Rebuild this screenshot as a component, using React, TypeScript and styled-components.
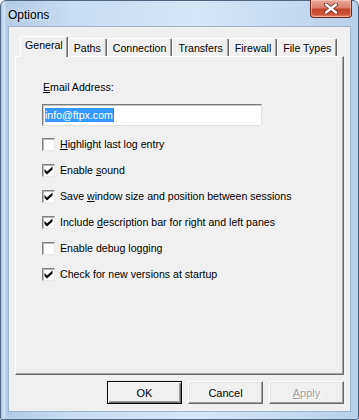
import styled, { createGlobalStyle } from "styled-components";

const Global = createGlobalStyle`
  html, body {
    margin: 0;
    padding: 0;
    width: 359px;
    height: 420px;
    overflow: hidden;
    background: #ffffff;
  }
  * {
    box-sizing: border-box;
  }
`;

const Window = styled.div`
  width: 359px;
  height: 420px;
  display: flex;
  flex-direction: column;
  padding: 0 7px 7px 7px;
  border: 1px solid #4f6683;
  border-radius: 6px 6px 2px 2px;
  background: linear-gradient(
    to right,
    #a9c3e0 0px,
    #d6e5f5 3px,
    #b4cbe5 5px,
    #c9dcf0 20%,
    #d7e6f6 55%,
    #c3d8ee 85%,
    #b8cfe8 100%
  );
  font-family: "Liberation Sans", Arial, sans-serif;
  font-size: 10.6px;
  color: #000;
`;

const TitleBar = styled.div`
  height: 25px;
  display: flex;
  justify-content: space-between;
  align-items: flex-start;
  margin-right: -1px;
`;

const Title = styled.div`
  font-size: 12px;
  padding-top: 7px;
  color: #000;
  text-shadow: 0 0 6px rgba(255, 255, 255, 0.9);
`;

const CloseButton = styled.div`
  width: 42px;
  height: 18px;
  margin-top: -1px;
  display: flex;
  align-items: center;
  justify-content: center;
  border: 1px solid #6d2a1d;
  border-top: none;
  border-radius: 0 0 4px 4px;
  background: linear-gradient(
    to bottom,
    #e9a99a 0%,
    #d9806b 45%,
    #c4442a 55%,
    #d0563c 85%,
    #e48a6f 100%
  );
  box-shadow: inset 0 0 0 1px rgba(255, 210, 200, 0.55);
`;

const Client = styled.div`
  flex: 1;
  display: flex;
  flex-direction: column;
  background: #f0f0f0;
  border: 1px solid #9fb3cb;
  padding: 9px 6px 7px 6px;
`;

const TabStrip = styled.div`
  display: flex;
  align-items: flex-end;
  padding-left: 5px;
  height: 20px;
`;

const Tab = styled.div<{ $active?: boolean }>`
  position: relative;
  z-index: ${(p) => (p.$active ? 2 : 1)};
  height: ${(p) => (p.$active ? "21px" : "18px")};
  margin-bottom: ${(p) => (p.$active ? "-1px" : "0")};
  padding: ${(p) => (p.$active ? "2px 4px 0 4px" : "3px 5px 0 5px")};
  background: #f0f0f0;
  border-top: 1px solid #ffffff;
  border-left: 1px solid #ffffff;
  border-right: 1px solid #696969;
  border-radius: 2px 2px 0 0;
  box-shadow: inset -1px 0 0 #a0a0a0;
  white-space: nowrap;
`;

const Panel = styled.div`
  flex: 1;
  display: flex;
  flex-direction: column;
  padding: 24px 26px 0 26px;
  border-top: 1px solid #ffffff;
  border-left: 1px solid #ffffff;
  border-right: 1px solid #696969;
  border-bottom: 1px solid #696969;
  box-shadow: inset -1px -1px 0 #a0a0a0;
`;

const FieldLabel = styled.div`
  height: 13px;
  line-height: 13px;
  padding-left: 1px;
`;

const TextInput = styled.div`
  width: 220px;
  height: 22px;
  margin-top: 10px;
  display: flex;
  align-items: center;
  padding-left: 2px;
  background: #ffffff;
  border-top: 1px solid #7a7a7a;
  border-left: 1px solid #7a7a7a;
  border-right: 1px solid #e3e3e3;
  border-bottom: 1px solid #e3e3e3;
  box-shadow: inset 1px 1px 0 #c8c8c8;
`;

const Selected = styled.span`
  background: #3399ff;
  color: #ffffff;
  line-height: 14px;
  border-right: 1px solid #c85a00;
`;

const Options = styled.div`
  display: flex;
  flex-direction: column;
  gap: 13px;
  margin-top: 12px;
`;

const Row = styled.label`
  display: flex;
  align-items: center;
  gap: 5px;
  height: 13px;
  line-height: 13px;
  white-space: nowrap;
`;

const Box = styled.span`
  width: 13px;
  height: 13px;
  flex: none;
  display: flex;
  align-items: center;
  justify-content: center;
  background: #ffffff;
  border-top: 1px solid #808080;
  border-left: 1px solid #808080;
  border-right: 1px solid #e8e8e8;
  border-bottom: 1px solid #e8e8e8;
  box-shadow: inset 1px 1px 0 #b8b8b8;
`;

const U = styled.span`
  text-decoration: underline;
`;

const ButtonRow = styled.div`
  display: flex;
  justify-content: flex-end;
  gap: 6px;
  margin-top: 6px;
`;

const Button = styled.div<{ $default?: boolean; $disabled?: boolean }>`
  width: 75px;
  height: 23px;
  display: flex;
  align-items: center;
  justify-content: center;
  font-size: 11px;
  background: #f0f0f0;
  color: ${(p) => (p.$disabled ? "#a0a0a0" : "#000")};
  text-shadow: ${(p) => (p.$disabled ? "1px 1px 0 #ffffff" : "none")};
  border: 1px solid ${(p) => (p.$default ? "#000000" : "#ffffff")};
  border-right-color: ${(p) => (p.$default ? "#000000" : "#696969")};
  border-bottom-color: ${(p) => (p.$default ? "#000000" : "#696969")};
  box-shadow: ${(p) =>
    p.$default
      ? "inset 1px 1px 0 #ffffff, inset -1px -1px 0 #696969, inset -2px -2px 0 #a0a0a0"
      : "inset -1px -1px 0 #a0a0a0, inset 1px 1px 0 #e3e3e3"};
`;

function Check() {
  return (
    <svg width="9" height="9" viewBox="0 0 9 9">
      <path d="M0.5 3 L3 5.5 L8.5 0.5 L8.5 3.5 L3 8.5 L0.5 6 Z" fill="#000" />
    </svg>
  );
}

function CloseGlyph() {
  return (
    <svg width="14" height="11" viewBox="0 0 14 11">
      <path
        d="M2 1.5 L12 9.5 M12 1.5 L2 9.5"
        stroke="#6b2216"
        strokeWidth="4"
        strokeLinecap="round"
      />
      <path
        d="M2 1.5 L12 9.5 M12 1.5 L2 9.5"
        stroke="#ffffff"
        strokeWidth="2.4"
        strokeLinecap="round"
      />
    </svg>
  );
}

function Option(props: { checked: boolean; children: React.ReactNode }) {
  return (
    <Row>
      <Box>{props.checked && <Check />}</Box>
      <span>{props.children}</span>
    </Row>
  );
}

const tabs = ["General", "Paths", "Connection", "Transfers", "Firewall", "File Types"];

export default function App() {
  return (
    <>
      <Global />
      <Window>
        <TitleBar>
          <Title>Options</Title>
          <CloseButton>
            <CloseGlyph />
          </CloseButton>
        </TitleBar>
        <Client>
          <TabStrip>
            {tabs.map((t, i) => (
              <Tab key={t} $active={i === 0}>
                {t}
              </Tab>
            ))}
          </TabStrip>
          <Panel>
            <FieldLabel>
              <U>E</U>mail Address:
            </FieldLabel>
            <TextInput>
              <Selected>info@ftpx.com</Selected>
            </TextInput>
            <Options>
              <Option checked={false}>
                <U>H</U>ighlight last log entry
              </Option>
              <Option checked>
                Enable <U>s</U>ound
              </Option>
              <Option checked>
                Save <U>w</U>indow size and position between sessions
              </Option>
              <Option checked>
                Include <U>d</U>escription bar for right and left panes
              </Option>
              <Option checked={false}>Enable debug logging</Option>
              <Option checked>Check for new versions at startup</Option>
            </Options>
          </Panel>
          <ButtonRow>
            <Button $default>OK</Button>
            <Button>Cancel</Button>
            <Button $disabled>
              <U>A</U>pply
            </Button>
          </ButtonRow>
        </Client>
      </Window>
    </>
  );
}
